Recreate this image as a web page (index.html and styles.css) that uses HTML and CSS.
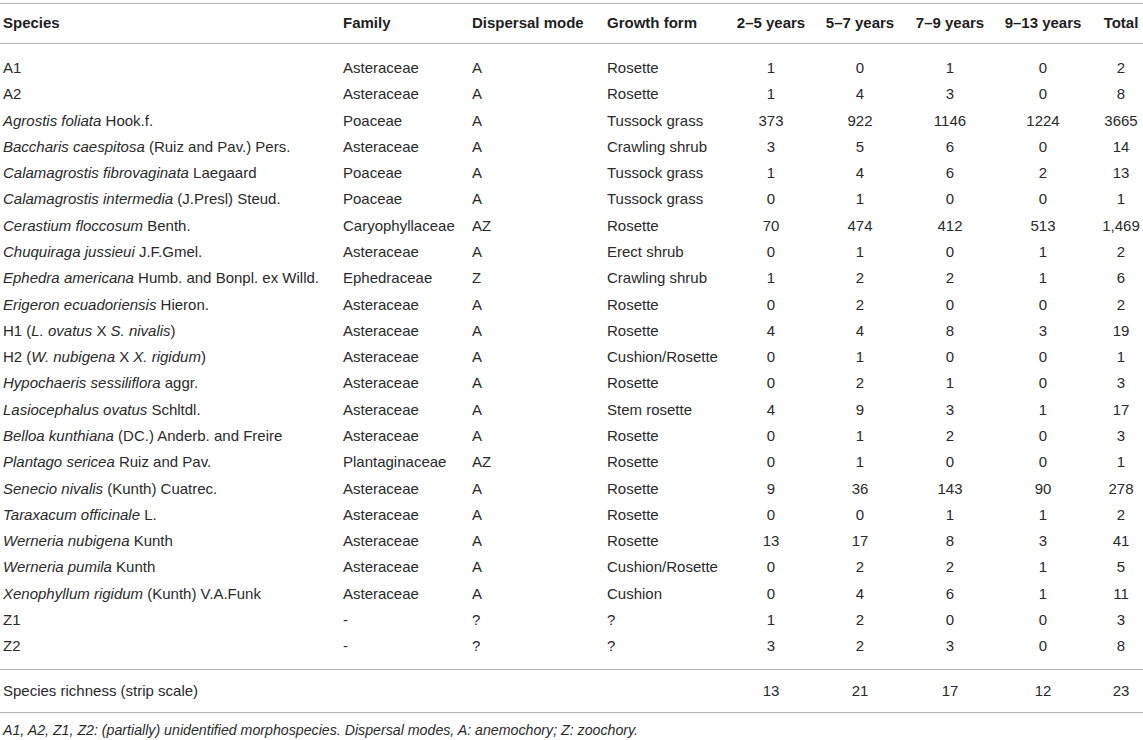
FILE: index.html
```html
<!DOCTYPE html>
<html lang="en">
<head>
<meta charset="utf-8">
<title>Species table</title>
<link rel="stylesheet" href="styles.css">
</head>
<body>
<div class="table-wrap">
<table class="data">
<colgroup>
<col class="c-species"><col class="c-family"><col class="c-disp"><col class="c-growth">
<col class="c-n1"><col class="c-n2"><col class="c-n3"><col class="c-n4"><col class="c-total">
</colgroup>
<thead>
<tr>
<th>Species</th><th>Family</th><th>Dispersal mode</th><th>Growth form</th>
<th class="num">2–5 years</th><th class="num">5–7 years</th><th class="num">7–9 years</th><th class="num">9–13 years</th><th class="num last">Total</th>
</tr>
</thead>
<tbody>
<tr class="first"><td>A1</td><td>Asteraceae</td><td>A</td><td>Rosette</td><td class="num">1</td><td class="num">0</td><td class="num">1</td><td class="num">0</td><td class="num last">2</td></tr>
<tr><td>A2</td><td>Asteraceae</td><td>A</td><td>Rosette</td><td class="num">1</td><td class="num">4</td><td class="num">3</td><td class="num">0</td><td class="num last">8</td></tr>
<tr><td><i>Agrostis foliata</i> Hook.f.</td><td>Poaceae</td><td>A</td><td>Tussock grass</td><td class="num">373</td><td class="num">922</td><td class="num">1146</td><td class="num">1224</td><td class="num last">3665</td></tr>
<tr><td><i>Baccharis caespitosa</i> (Ruiz and Pav.) Pers.</td><td>Asteraceae</td><td>A</td><td>Crawling shrub</td><td class="num">3</td><td class="num">5</td><td class="num">6</td><td class="num">0</td><td class="num last">14</td></tr>
<tr><td><i>Calamagrostis fibrovaginata</i> Laegaard</td><td>Poaceae</td><td>A</td><td>Tussock grass</td><td class="num">1</td><td class="num">4</td><td class="num">6</td><td class="num">2</td><td class="num last">13</td></tr>
<tr><td><i>Calamagrostis intermedia</i> (J.Presl) Steud.</td><td>Poaceae</td><td>A</td><td>Tussock grass</td><td class="num">0</td><td class="num">1</td><td class="num">0</td><td class="num">0</td><td class="num last">1</td></tr>
<tr><td><i>Cerastium floccosum</i> Benth.</td><td>Caryophyllaceae</td><td>AZ</td><td>Rosette</td><td class="num">70</td><td class="num">474</td><td class="num">412</td><td class="num">513</td><td class="num last">1,469</td></tr>
<tr><td><i>Chuquiraga jussieui</i> J.F.Gmel.</td><td>Asteraceae</td><td>A</td><td>Erect shrub</td><td class="num">0</td><td class="num">1</td><td class="num">0</td><td class="num">1</td><td class="num last">2</td></tr>
<tr><td><i>Ephedra americana</i> Humb. and Bonpl. ex Willd.</td><td>Ephedraceae</td><td>Z</td><td>Crawling shrub</td><td class="num">1</td><td class="num">2</td><td class="num">2</td><td class="num">1</td><td class="num last">6</td></tr>
<tr><td><i>Erigeron ecuadoriensis</i> Hieron.</td><td>Asteraceae</td><td>A</td><td>Rosette</td><td class="num">0</td><td class="num">2</td><td class="num">0</td><td class="num">0</td><td class="num last">2</td></tr>
<tr><td>H1 (<i>L. ovatus</i> X <i>S. nivalis</i>)</td><td>Asteraceae</td><td>A</td><td>Rosette</td><td class="num">4</td><td class="num">4</td><td class="num">8</td><td class="num">3</td><td class="num last">19</td></tr>
<tr><td>H2 (<i>W. nubigena</i> X <i>X. rigidum</i>)</td><td>Asteraceae</td><td>A</td><td>Cushion/Rosette</td><td class="num">0</td><td class="num">1</td><td class="num">0</td><td class="num">0</td><td class="num last">1</td></tr>
<tr><td><i>Hypochaeris sessiliflora</i> aggr.</td><td>Asteraceae</td><td>A</td><td>Rosette</td><td class="num">0</td><td class="num">2</td><td class="num">1</td><td class="num">0</td><td class="num last">3</td></tr>
<tr><td><i>Lasiocephalus ovatus</i> Schltdl.</td><td>Asteraceae</td><td>A</td><td>Stem rosette</td><td class="num">4</td><td class="num">9</td><td class="num">3</td><td class="num">1</td><td class="num last">17</td></tr>
<tr><td><i>Belloa kunthiana</i> (DC.) Anderb. and Freire</td><td>Asteraceae</td><td>A</td><td>Rosette</td><td class="num">0</td><td class="num">1</td><td class="num">2</td><td class="num">0</td><td class="num last">3</td></tr>
<tr><td><i>Plantago sericea</i> Ruiz and Pav.</td><td>Plantaginaceae</td><td>AZ</td><td>Rosette</td><td class="num">0</td><td class="num">1</td><td class="num">0</td><td class="num">0</td><td class="num last">1</td></tr>
<tr><td><i>Senecio nivalis</i> (Kunth) Cuatrec.</td><td>Asteraceae</td><td>A</td><td>Rosette</td><td class="num">9</td><td class="num">36</td><td class="num">143</td><td class="num">90</td><td class="num last">278</td></tr>
<tr><td><i>Taraxacum officinale</i> L.</td><td>Asteraceae</td><td>A</td><td>Rosette</td><td class="num">0</td><td class="num">0</td><td class="num">1</td><td class="num">1</td><td class="num last">2</td></tr>
<tr><td><i>Werneria nubigena</i> Kunth</td><td>Asteraceae</td><td>A</td><td>Rosette</td><td class="num">13</td><td class="num">17</td><td class="num">8</td><td class="num">3</td><td class="num last">41</td></tr>
<tr><td><i>Werneria pumila</i> Kunth</td><td>Asteraceae</td><td>A</td><td>Cushion/Rosette</td><td class="num">0</td><td class="num">2</td><td class="num">2</td><td class="num">1</td><td class="num last">5</td></tr>
<tr><td><i>Xenophyllum rigidum</i> (Kunth) V.A.Funk</td><td>Asteraceae</td><td>A</td><td>Cushion</td><td class="num">0</td><td class="num">4</td><td class="num">6</td><td class="num">1</td><td class="num last">11</td></tr>
<tr><td>Z1</td><td>-</td><td>?</td><td>?</td><td class="num">1</td><td class="num">2</td><td class="num">0</td><td class="num">0</td><td class="num last">3</td></tr>
<tr class="final"><td>Z2</td><td>-</td><td>?</td><td>?</td><td class="num">3</td><td class="num">2</td><td class="num">3</td><td class="num">0</td><td class="num last">8</td></tr>
</tbody>
<tfoot>
<tr class="summary"><td>Species richness (strip scale)</td><td></td><td></td><td></td><td class="num">13</td><td class="num">21</td><td class="num">17</td><td class="num">12</td><td class="num last">23</td></tr>
</tfoot>
</table>
<p class="note">A1, A2, Z1, Z2: (partially) unidentified morphospecies. Dispersal modes, A: anemochory; Z: zoochory.</p>
</div>
</body>
</html>
```
FILE: styles.css
```css
html, body {
  margin: 0;
  padding: 0;
  background: #ffffff;
}

body {
  font-family: "Liberation Sans", Arial, sans-serif;
  color: #2a2a2a;
  font-size: 15px;
}

.table-wrap {
  padding-top: 3px;
  width: 1143px;
}

.data {
  width: 1143px;
  table-layout: fixed;
  border-collapse: collapse;
  border-top: 1px solid #b4b4b4;
  border-bottom: 1px solid #b4b4b4;
}

.c-species { width: 340px; }
.c-family { width: 129px; }
.c-disp { width: 135px; }
.c-growth { width: 124px; }
.c-n1 { width: 86px; }
.c-n2 { width: 92px; }
.c-n3 { width: 88px; }
.c-n4 { width: 98px; }
.c-total { width: 51px; }

.data th,
.data td {
  text-align: left;
  padding: 4.15px 3px;
  line-height: 18px;
  white-space: nowrap;
  vertical-align: middle;
}

.data th {
  font-weight: bold;
  color: #1e1e1e;
  padding-top: 10px;
  padding-bottom: 11px;
  border-bottom: 1px solid #b4b4b4;
}

.data .num {
  text-align: center;
}

.data .last {
  padding-left: 7px;
  padding-right: 0;
}

.data tr.first td {
  padding-top: 15px;
}

.data tr.final td {
  padding-bottom: 14px;
}

.data tr.summary td {
  border-top: 1px solid #b4b4b4;
  padding-top: 12px;
  padding-bottom: 12px;
}

.note {
  margin: 0;
  padding: 9px 3px 0;
  font-style: italic;
  font-size: 14.2px;
  line-height: 16px;
  color: #2a2a2a;
}
```
